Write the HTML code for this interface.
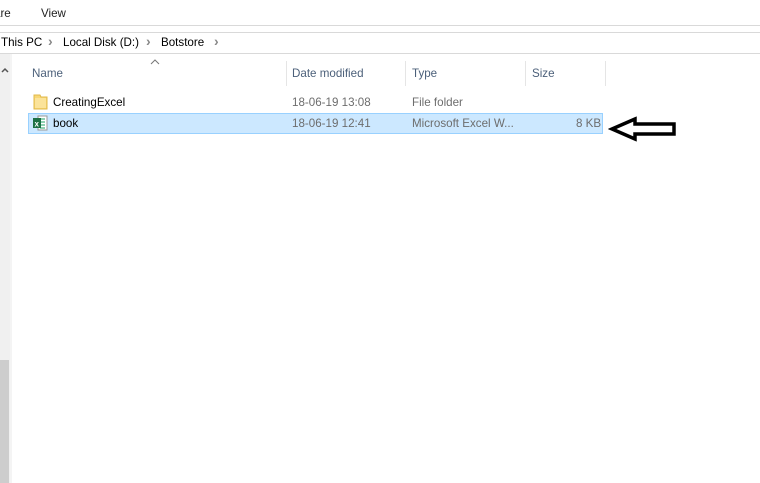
<!DOCTYPE html>
<html><head><style>
body{margin:0;width:760px;height:483px;background:#fff;position:relative;overflow:hidden;font-family:"Liberation Sans",sans-serif;font-size:11.6px;color:#000}
.a{position:absolute;white-space:nowrap}
.h{position:absolute;top:0;height:1px;background:#d9d9d9}
.sep{position:absolute;top:61px;height:25px;width:1px;background:#e5e5e5}
.g{color:#6d6d6d}
.hd{color:#4c607a}
.ch{font-size:14px;color:#888;font-weight:bold}
</style></head><body>
<div class="a" style="left:-6px;top:7px;color:#222">are</div>
<div class="a" style="left:41px;top:7px;color:#222">View</div>
<div class="h" style="left:0;width:760px;top:25px"></div>
<div class="h" style="left:0;width:760px;top:32px"></div>
<div class="h" style="left:0;width:760px;top:53px"></div>
<div class="a" style="left:1px;top:36px">This PC</div>
<div class="a ch" style="left:48px;top:33px">›</div>
<div class="a" style="left:63px;top:36px">Local Disk (D:)</div>
<div class="a ch" style="left:146px;top:33px">›</div>
<div class="a" style="left:161px;top:36px">Botstore</div>
<div class="a ch" style="left:214px;top:33px">›</div>
<div class="a" style="left:0;top:54px;width:10px;height:429px;background:#f0f0f0"></div>
<div class="a" style="left:0;top:360px;width:9px;height:123px;background:#cdcdcd"></div>
<div class="a" style="left:10px;top:54px;width:2px;height:429px;background:#f4f4f4"></div>
<svg class="a" style="left:0;top:66px" width="10" height="8"><path d="M2 6L5 3L8 6" fill="none" stroke="#555" stroke-width="1.5"/></svg>
<svg class="a" style="left:150px;top:58px" width="10" height="8"><path d="M1 6L5 2L9 6" fill="none" stroke="#777" stroke-width="1"/></svg>
<div class="a hd" style="left:32px;top:67px">Name</div>
<div class="sep" style="left:286px"></div>
<div class="a hd" style="left:292px;top:67px">Date modified</div>
<div class="sep" style="left:405px"></div>
<div class="a hd" style="left:412px;top:67px">Type</div>
<div class="sep" style="left:525px"></div>
<div class="a hd" style="left:532px;top:67px">Size</div>
<div class="sep" style="left:605px"></div>
<svg class="a" style="left:33px;top:94px" width="16" height="16"><path d="M1 1h6l1 2h6v12H1z" fill="#f8d775" stroke="#e0b84a"/><rect x="2" y="4" width="11" height="10" fill="#fbe39a"/></svg>
<div class="a" style="left:53px;top:96px">CreatingExcel</div>
<div class="a g" style="left:292px;top:96px">18-06-19 13:08</div>
<div class="a g" style="left:412px;top:96px">File folder</div>
<div class="a" style="left:28px;top:113px;width:573px;height:19px;background:#cce8ff;border:1px solid #99d1ff"></div>
<svg class="a" style="left:32px;top:115px" width="16" height="16"><rect x="6" y="1" width="9" height="14" fill="#fff" stroke="#9a9a9a"/><path d="M8 4h5M8 7h5M8 10h5M8 13h5" stroke="#21a366"/><rect x="1" y="3" width="8" height="10" fill="#1d7044"/><text x="2.5" y="11.5" font-size="8" fill="#fff" font-family="Liberation Sans" font-weight="bold">x</text></svg>
<div class="a" style="left:53px;top:117px">book</div>
<div class="a g" style="left:292px;top:117px">18-06-19 12:41</div>
<div class="a g" style="left:412px;top:117px">Microsoft Excel W...</div>
<div class="a g" style="left:576px;top:117px">8 KB</div>
<svg class="a" style="left:608px;top:116px" width="70" height="26"><path d="M4 13 L27 3 L27 8 L66 8 L66 18 L27 18 L27 23 Z" fill="none" stroke="#000" stroke-width="3.5" stroke-linejoin="miter"/></svg>
</body></html>
